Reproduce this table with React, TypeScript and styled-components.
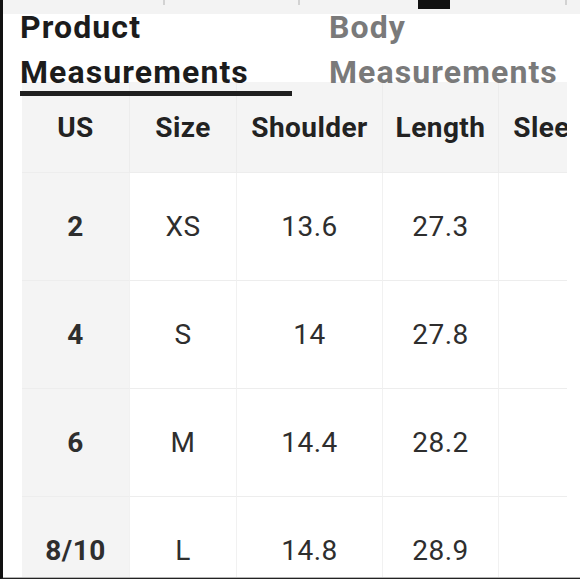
import styled, { createGlobalStyle } from "styled-components"

const GlobalStyle = createGlobalStyle`
  html, body {
    margin: 0;
    padding: 0;
    background: #ffffff;
  }
  body {
    font-family: Roboto, "Noto Sans", "Liberation Sans", sans-serif;
    color: #222;
  }
`

const Frame = styled.div`
  box-sizing: border-box;
  width: 580px;
  height: 579px;
  border-left: 3px solid #111;
  border-bottom: 1px solid #222;
  display: flex;
  flex-direction: column;
  overflow: hidden;
  background: #fff;
`
const Viewport = styled.div`
  flex: 1;
  min-height: 0;
  display: flex;
  flex-direction: column;
  overflow: hidden;
  border-bottom: 1px solid #b4b4b4;
`
const TopStrip = styled.div`
  position: relative;
  flex: 0 0 14px;
  min-height: 0;
  background: #f3f3f3;
`
const Tick = styled.span<{ $x: number }>`
  position: absolute;
  top: 0;
  left: ${p => p.$x}px;
  width: 2px;
  height: 5px;
  background: #d2d2d2;
`
const Marker = styled.span`
  position: absolute;
  top: 0;
  left: 415px;
  width: 32px;
  height: 9px;
  background: #111;
`
const TabBar = styled.div`
  flex: 0 0 68px;
  height: 68px;
  min-height: 0;
  display: flex;
  align-items: flex-start;
  gap: 37px;
  padding-left: 17px;
`
const Tab = styled.div<{ $active?: boolean }>`
  position: relative;
  flex: 0 0 272px;
  margin-top: -9px;
  font-size: 32px;
  line-height: 45px;
  font-weight: 700;
  letter-spacing: 1.1px;
  color: ${p => (p.$active ? "#1c1c1c" : "#7a7a7a")};
  white-space: nowrap;
  ${p => p.$active && `
    &::after {
      content: "";
      position: absolute;
      left: 0;
      right: 0;
      top: 86px;
      height: 5px;
      background: #1f1f1f;
    }
  `}
`
const TableClip = styled.div`
  margin-left: 19px;
  width: 545px;
  overflow: hidden;
`
const Grid = styled.div`
  display: grid;
  grid-template-columns: 108px 107px 146px 116px 116px;
  grid-template-rows: 91px repeat(4, 108px);
  width: 593px;
`
const HeadCell = styled.div`
  box-sizing: border-box;
  display: flex;
  align-items: center;
  justify-content: center;
  background: #f4f4f4;
  border-right: 1px solid #ececec;
  border-bottom: 1px solid #ededed;
  font-size: 28px;
  font-weight: 700;
  color: #222;
  white-space: nowrap;
  letter-spacing: 0.45px;
`
const Cell = styled.div<{ $key?: boolean }>`
  box-sizing: border-box;
  display: flex;
  align-items: center;
  justify-content: center;
  background: ${p => (p.$key ? "#f4f4f4" : "#ffffff")};
  border-right: 1px solid #f1f1f1;
  border-bottom: 1px solid #ededed;
  font-size: 28px;
  font-weight: ${p => (p.$key ? 700 : 400)};
  letter-spacing: 0.5px;
  color: #2e2e2e;
  white-space: nowrap;
`

const columns = ["US", "Size", "Shoulder", "Length", "Sleeve"]

const rows = [
  ["2", "XS", "13.6", "27.3", ""],
  ["4", "S", "14", "27.8", ""],
  ["6", "M", "14.4", "28.2", ""],
  ["8/10", "L", "14.8", "28.9", ""],
]

const App = () => {
  return (
    <>
      <GlobalStyle />
      <Frame>
        <Viewport>
          <TopStrip>
            <Tick $x={160} />
            <Tick $x={295} />
            <Marker />
            <Tick $x={562} />
          </TopStrip>
          <TabBar>
            <Tab $active>Product<br />Measurements</Tab>
            <Tab>Body<br />Measurements</Tab>
          </TabBar>
          <TableClip>
            <Grid>
              {columns.map(col => (
                <HeadCell key={col}>{col}</HeadCell>
              ))}
              {rows.map(row =>
                row.map((val, i) => (
                  <Cell key={row[0] + i} $key={i === 0}>{val}</Cell>
                ))
              )}
            </Grid>
          </TableClip>
        </Viewport>
      </Frame>
    </>
  )
}

export default App
